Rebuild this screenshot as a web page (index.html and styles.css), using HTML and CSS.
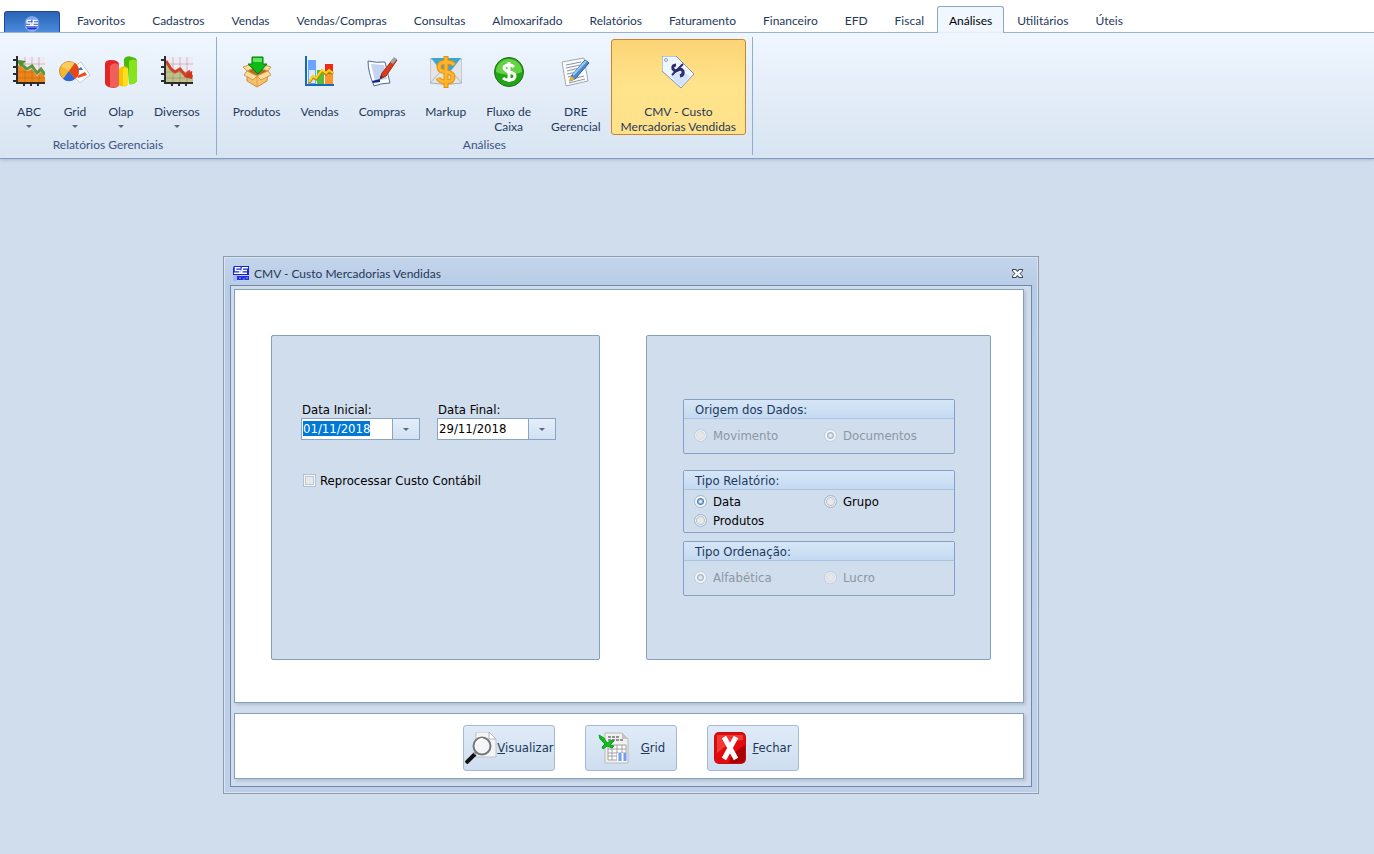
FILE: index.html
```html
<!DOCTYPE html>
<html lang="pt-BR">
	<head>
		<meta charset="utf-8">
		<title>CMV - Custo Mercadorias Vendidas</title>
		<link rel="stylesheet" href="styles.css">
	</head>
	<body>

		<nav class="tabBar">
			<button class="appBtn" aria-label="Menu">
				<svg width="16" height="16" viewBox="0 0 16 16">
					<circle cx="8" cy="8" r="7.500" fill="#2450d0"/>
					<path d="M1 5a7.500 7.500 0 0 1 14 0z" fill="#7ba4f2"/>
					<path d="M1 11h14a7.500 7.500 0 0 1-14 0z" fill="#9db8f6"/>
					<path d="M7 4.500H3v2.500h4v2.500H2M14 4.500H9.500L8.500 9.500H14M9 7h5" fill="none" stroke="#fff" stroke-width="1.500"/>
					<path d="M3 12.500h10" stroke="#1d2fd0" stroke-width="2"/>
					<circle cx="8" cy="8" r="7" fill="none" stroke="#86abf0" stroke-width="1"/>
				</svg>
			</button>
			<a href="#" class="tab">Favoritos</a>
			<a href="#" class="tab">Cadastros</a>
			<a href="#" class="tab">Vendas</a>
			<a href="#" class="tab">Vendas/Compras</a>
			<a href="#" class="tab">Consultas</a>
			<a href="#" class="tab">Almoxarifado</a>
			<a href="#" class="tab">Relatórios</a>
			<a href="#" class="tab">Faturamento</a>
			<a href="#" class="tab">Financeiro</a>
			<a href="#" class="tab">EFD</a>
			<a href="#" class="tab">Fiscal</a>
			<a href="#" class="tab active">Análises</a>
			<a href="#" class="tab">Utilitários</a>
			<a href="#" class="tab">Úteis</a>
		</nav>

		<div class="ribbon">
			<!-- Relatórios Gerenciais -->
			<div class="group">
				<div class="items">
					<button class="item">
						<svg class="icon" viewBox="0 0 32 32">
							<path d="M5 1h27v25H5z" fill="#f1e9f5"/>
							<path d="M5 9l5 3 4 3 5-2 5 7 4-4 4 5v6H5z" fill="#f08313"/>
							<path d="M5 5l5 5 4 3 5-3 5 7 4-4 4 6" fill="none" stroke="#5b9b38" stroke-width="3"/>
							<path d="M5 4l8 1-6 6z" fill="#4f9430"/>
							<path d="M12 1v25M19 1v25M26 1v25M5 8h27M5 16h27M5 22h27" stroke="#6b5549" stroke-opacity=".3"/>
							<path d="M4 0v28M3 27h29" stroke="#2d2d2d" stroke-width="2"/>
							<path d="M0 4h4M0 11h4M0 18h4M0 25h4M11 27v3M18 27v3M25 27v3" stroke="#2d2d2d" stroke-width="2"/>
						</svg>
						<span>ABC</span><i class="arrow"></i>
					</button>
					<button class="item">
						<svg class="icon" viewBox="0 0 32 32">
							<path d="M17 9l5-3 9 13-10 8-6-6z" fill="#fafafa" stroke="#c9c9d1"/>
							<path d="M18 14l4-3 2 3z" fill="#316fe0"/>
							<path d="M18 20l8-4 2 3-9 3z" fill="#ea4b24"/>
							<circle cx="10" cy="15" r="9.500" fill="#f7b62f" stroke="#c98a3a"/>
							<path d="M2 10a10 10 0 0 1 13-3l-5 8z" fill="#fbdc7c" fill-opacity=".6"/>
							<path d="M10 15l6-8a10 10 0 0 1 0 16z" fill="#e4481a"/>
							<path d="M10 15l6 8a10 10 0 0 1-12 0z" fill="#2b66da"/>
						</svg>
						<span>Grid</span><i class="arrow"></i>
					</button>
					<button class="item">
						<svg class="icon" viewBox="0 0 32 32">
							<path d="M0 8q0-4 6-4 8 0 8 5v20q-2 3-6 3-8-1-8-5z" fill="#e32527"/>
							<path d="M5 10q4-5 9-1v21q-4 3-9 1z" fill="#f0605a"/>
							<path d="M14 13q4-5 9-1v17q-5 3-9 0z" fill="#f5c400"/>
							<path d="M18 13q3-2 5 0v16l-5 1z" fill="#ffdf22"/>
							<path d="M19 3q2-4 8-2 5 1 5 4v20q-3 4-8 3l-1-16-4-2z" fill="#4db80c"/>
							<path d="M24 5q4-3 8 0v20q-3 4-8 3z" fill="#86e41b"/>
						</svg>
						<span>Olap</span><i class="arrow"></i>
					</button>
					<button class="item">
						<svg class="icon" viewBox="0 0 32 32">
							<path d="M5 1h27v25H5z" fill="#f1e9f5"/>
							<path d="M5 5l5 8 4 3 5-3 5 7 4-4 4 5v6H5z" fill="#bfc18c"/>
							<path d="M12 1v25M19 1v25M26 1v25M5 8h27M5 16h27M5 22h27" stroke="#6b5549" stroke-opacity=".3"/>
							<path d="M5 5l5 8 4 3 5-3 5 6 4-3 3 5" fill="none" stroke="#cf4228" stroke-width="3"/>
							<path d="M31 15v8l-8-2z" fill="#cf3322"/>
							<path d="M4 0v28M3 27h29" stroke="#2d2d2d" stroke-width="2"/>
							<path d="M0 4h4M0 11h4M0 18h4M0 25h4M11 27v3M18 27v3M25 27v3" stroke="#2d2d2d" stroke-width="2"/>
						</svg>
						<span>Diversos</span><i class="arrow"></i>
					</button>
				</div>
				<div class="groupName">Relatórios Gerenciais</div>
			</div>

			<!-- Análises -->
			<div class="group">
				<div class="items">
					<button class="item">
						<svg class="icon" viewBox="0 0 32 32">
							<path d="M6 15l10-4 11 4-1 10-10 6-10-6z" fill="#f6c16c" stroke="#c98c37"/>
							<path d="M6 15l10 5 11-5-11-5z" fill="#a96e27"/>
							<path d="M6 15l10 5-4 4-9-5zM27 15l-11 5 4 4 10-5zM6 15l-4-4 6-2 5 3zM27 15l3-4-6-2-5 3z" fill="#fddb9b" stroke="#d19a4b"/>
							<path d="M16 21v10" stroke="#dda04d"/>
							<path d="M11 1h11v7h4l-9 10-10-10h4z" fill="#0dbb18" stroke="#087a10"/>
							<path d="M12 2h9v4h-9z" fill="#64e45e"/>
						</svg>
						<span>Produtos</span>
					</button>
					<button class="item">
						<svg class="icon" viewBox="0 0 32 32">
							<path d="M4 4h8v24H4z" fill="#6ba5ff"/>
							<path d="M5 14h6v13H5z" fill="#d9eaff"/>
							<path d="M13 14h7v14h-7z" fill="#54bd35"/>
							<path d="M21 8h8v20h-8z" fill="#ed2a13"/>
							<path d="M21 18h8v10h-8z" fill="#ff942b"/>
							<path d="M5 27l4-6 3 2 6-8 4 3 3-3 4 3" fill="none" stroke="#b18e00" stroke-width="3"/>
							<path d="M5 26l4-6 3 2 6-8 4 3 3-3 4 3" fill="none" stroke="#ffd21d" stroke-width="2"/>
							<path d="M2 0v29h28" fill="none" stroke="#1869be" stroke-width="2"/>
						</svg>
						<span>Vendas</span>
					</button>
					<button class="item">
						<svg class="icon" viewBox="0 0 32 32">
							<path d="M2 5q8 2 17 1l5 21q-8 0-16 3Q2 16 2 5z" fill="#fff" stroke="#4c6b9c"/>
							<path d="M5 8l13 1 3 14-12 2z" fill="#c4d3f1"/>
							<path d="M6 25l8-2v3l-7 1z" fill="#11278b"/>
							<path d="M14 23l2-6L28 2l3 2-11 16z" fill="#de3a1a" stroke="#983018"/>
							<path d="M24 6l4-5 3 2-4 5z" fill="#a1a5ae"/>
							<path d="M14 23l3-2-2-2z" fill="#30343c"/>
						</svg>
						<span>Compras</span>
					</button>
					<button class="item">
						<svg class="icon" viewBox="0 0 32 32">
							<path d="M0 3h32v24q-16 3-32 0z" fill="#e2e5e8" stroke="#a7afb7"/>
							<path d="M1 2h30L20 16h-8z" fill="#38a7d7"/>
							<path d="M0 27l12-13M32 27L20 14" stroke="#aeb5bb"/>
							<path d="M24 9q-2-3-8-3-7 0-7 5 0 4 7 5t7 5q0 5-7 5-6 0-8-4M16 0v32" fill="none" stroke="#e98d08" stroke-width="5"/>
							<path d="M24 9q-2-3-8-3-7 0-7 5 0 4 7 5t7 5q0 5-7 5-6 0-8-4M16 1v30" fill="none" stroke="#ffb52c" stroke-width="3"/>
						</svg>
						<span>Markup</span>
					</button>
					<button class="item">
						<svg class="icon" viewBox="0 0 32 32">
							<circle cx="16" cy="16" r="14.500" fill="#1fa516" stroke="#25671f"/>
							<path d="M3 16a13 13 0 0 1 26 0q-13 6-26 0z" fill="#63d344"/>
							<path d="M21 11q-2-2-5-2-5 0-5 3 0 2 5 4 6 1 6 4 0 4-6 4-4 0-6-2M16 6v20" fill="none" stroke="#fff" stroke-width="3"/>
						</svg>
						<span>Fluxo de<br>Caixa</span>
					</button>
					<button class="item">
						<svg class="icon" viewBox="0 0 32 32">
							<path d="M2 6l22-4 4 23-22 5z" fill="#fafbfc" stroke="#a2a8af"/>
							<path d="M6 9l15-3M6 12l14-3M7 15l12-3M7 18l10-2M8 21l7-2M9 24l15-4M9 27l16-4" stroke="#8d949d"/>
							<path d="M10 25l2-6L25 4l4 3-14 16z" fill="#4e8cd2" stroke="#285992"/>
							<path d="M13 19L26 5" stroke="#9ac9f2" stroke-width="2"/>
							<path d="M9 26l2-6 4 3z" fill="#e6b337"/>
						</svg>
						<span>DRE<br>Gerencial</span>
					</button>
					<button class="item selected">
						<svg class="icon" viewBox="0 0 32 32">
							<path d="M0 0h14l18 18-13 14L0 15z" fill="#eef6fe" stroke="#7f96bb"/>
							<path d="M8 20l11-5 9 5-9 11z" fill="#d1e4fa"/>
							<circle cx="4" cy="4" r="1.500" fill="#fff" stroke="#8b9dbc"/>
							<path d="M14 9q-4 0-3 4 2 3 5 1t5 1q1 4-3 5" fill="none" stroke="#302b6b" stroke-width="3"/>
							<path d="M10 19l11-11" stroke="#302b6b" stroke-width="2"/>
						</svg>
						<span>CMV - Custo<br>Mercadorias Vendidas</span>
					</button>
				</div>
				<div class="groupName">Análises</div>
			</div>
		</div>

		<main class="desktop">
			<form class="window">
				<div class="titleBar">
					<svg width="16" height="15" viewBox="0 0 16 15">
						<path d="M1 0h15v9H0V2z" fill="#1428cf"/>
						<path d="M7.500 1.800H2.500v2.700h4.500v2.700H1M15 1.800H9.500L8.500 7.200H14M9 4.500h5" fill="none" stroke="#fff" stroke-width="1.500"/>
						<path d="M0 9h5l-1 6H0z" fill="#a9b9f0"/>
						<path d="M4 12h12" stroke="#2432dc" stroke-width="4"/>
						<path d="M7 11v2M11 12v2M14 11v2" stroke="#8d9cf0"/>
					</svg>
					<span class="title">CMV - Custo Mercadorias Vendidas</span>
					<button type="button" class="closeBtn" aria-label="Fechar janela">
						<svg width="11" height="9" viewBox="0 0 11 9">
							<path d="M0 0h4l1.500 1.500L7 0h4v2L8.500 4.500 11 7v2H7L5.500 7.500 4 9H0V7l2.500-2.500L0 2z" fill="#3c4659"/>
							<path d="M1 1h2.500l2 2 2-2H10v1L7.500 4.500 10 7v1H7.500l-2-2-2 2H1V7l2.500-2.500L1 2z" fill="#fff"/>
						</svg>
					</button>
				</div>

				<div class="frame">
					<div class="sheet content">
						<div class="panel left">
							<div class="dates">
								<div class="field">
									<label for="dataInicial">Data Inicial:</label>
									<div class="combo">
										<input type="text" id="dataInicial" value="01/11/2018">
										<button type="button" aria-label="Abrir calendário"><i class="arrow"></i></button>
									</div>
								</div>
								<div class="field">
									<label for="dataFinal">Data Final:</label>
									<div class="combo">
										<input type="text" id="dataFinal" value="29/11/2018">
										<button type="button" aria-label="Abrir calendário"><i class="arrow"></i></button>
									</div>
								</div>
							</div>
							<label class="check"><input type="checkbox">Reprocessar Custo Contábil</label>
						</div>

						<div class="panel right">
							<fieldset class="box origem" disabled>
								<legend>Origem dos Dados:</legend>
								<div class="options">
									<label><input type="radio" name="origem">Movimento</label>
									<label><input type="radio" name="origem" checked>Documentos</label>
								</div>
							</fieldset>
							<fieldset class="box tipo">
								<legend>Tipo Relatório:</legend>
								<div class="options">
									<label><input type="radio" name="tipo" checked>Data</label>
									<label><input type="radio" name="tipo">Grupo</label>
									<label><input type="radio" name="tipo">Produtos</label>
								</div>
							</fieldset>
							<fieldset class="box" disabled>
								<legend>Tipo Ordenação:</legend>
								<div class="options">
									<label><input type="radio" name="ordem" checked>Alfabética</label>
									<label><input type="radio" name="ordem">Lucro</label>
								</div>
							</fieldset>
						</div>
					</div>

					<div class="sheet actions">
						<button type="button" class="action tight">
							<svg width="32" height="32" viewBox="0 0 32 32">
								<path d="M11 0h13l7 7v18H11z" fill="#f3f4f5" stroke="#bfc2c6"/>
								<path d="M24 0v7h7z" fill="#fff" stroke="#b3b6bb"/>
								<path d="M1 31l9-9" stroke="#111" stroke-width="4"/>
								<path d="M9 22l3-3" stroke="#999" stroke-width="2"/>
								<circle cx="17" cy="14" r="8.500" fill="#f2f6f8" stroke="#777" stroke-width="2"/>
								<path d="M11 12q2-5 7-5" fill="none" stroke="#fff" stroke-width="2"/>
							</svg>
							<span><u>V</u>isualizar</span>
						</button>
						<button type="button" class="action wide">
							<svg width="32" height="32" viewBox="0 0 32 32">
								<path d="M7 1h17l6 6v24H7z" fill="#f1f1ef" stroke="#b8b9b8"/>
								<path d="M24 1v6h6z" fill="#c4c4c4"/>
								<path d="M10 5h12M10 8h15" stroke="#929292" stroke-width="2" stroke-dasharray="3 1"/>
								<path d="M10 13h18v15H10zM10 17h18M10 21h18M10 24h9M14 13v15M19 13v15M24 13v8" fill="#fff" stroke="#a0a0a0"/>
								<path d="M19 21h10v9H19z" fill="#f4f7fc"/>
								<path d="M22 21v8M27 21v8" stroke="#729eef" stroke-width="3"/>
								<path d="M1 3l5 3 3 5 5-3 2 1-4 4 4 1-2 2-5-2-4 3-1-2 3-3-5-5z" fill="#10be22" stroke="#08a318"/>
							</svg>
							<span><u>G</u>rid</span>
						</button>
						<button type="button" class="action">
							<svg width="32" height="32" viewBox="0 0 32 32">
								<rect width="32" height="32" rx="5" fill="#bd1015"/>
								<rect x="1" y="1" width="30" height="30" rx="4" fill="#e3090d"/>
								<path d="M3 3h26v5Q18 8 3 21z" fill="#f13a37"/>
								<path d="M15 31q2-10 16-18v14q-1 4-5 4z" fill="#aa0003"/>
								<path d="M10 5l12 22M22 5L10 27" stroke="#fff" stroke-width="5"/>
							</svg>
							<span><u>F</u>echar</span>
						</button>
					</div>
				</div>
			</form>
		</main>

		<script type="text/javascript">
			var DataInicial = document.getElementById('dataInicial');

			DataInicial.focus();
			DataInicial.select();
		</script>
	</body>
</html>
```
FILE: styles.css
```css
* {
	margin: 0;
	padding: 0;
	box-sizing: border-box;
}

body {
	min-height: 100vh;
	display: flex;
	flex-direction: column;
	background-color: #d0dded;
	font: 12px/15px Lato, "Open Sans", sans-serif;
	color: #1e395b;
}

button {
	font: inherit;
	color: inherit;
	border: 0;
	background: none;
}

.tabBar {
	display: flex;
	align-items: flex-end;
	height: 33px;
	padding-left: 4px;
	background-color: #fff;
	border-bottom: 1px solid #9bb3cc;
}

.tabBar .appBtn {
	width: 56px;
	height: 21px;
	margin-right: 4px;
	padding-top: 3px;
	border: 1px solid #1d4a9d;
	border-bottom: 0;
	border-radius: 3px 3px 0 0;
	background: linear-gradient(#2c64b5, #4a8bdc);
}

.tabBar .appBtn svg {
	display: block;
	margin: 0 auto;
}

.tabBar .tab {
	height: 26px;
	margin-left: -1px;
	padding: 6px 13px 0;
	border: 1px solid transparent;
	border-bottom: 0;
	color: #1e395b;
	text-decoration: none;
	white-space: nowrap;
}

.tabBar .active {
	height: 27px;
	margin-bottom: -1px;
	padding: 6px 11px 0;
	border-color: #8ba8cc;
	border-radius: 3px 3px 0 0;
	background-color: #f1f7fe;
	color: #000;
}

.ribbon {
	display: flex;
	height: 126px;
	padding: 4px 0 3px;
	border-bottom: 1px solid #849dbd;
	background: linear-gradient(#eff6fe, #d8e4f2);
	box-shadow: 0 1px 3px #a9b9ce;
}

.ribbon .group {
	display: flex;
	flex-direction: column;
	padding: 2px 6px 0;
	border-right: 1px solid #98abc6;
}

.ribbon .items {
	display: flex;
}

.ribbon .item {
	display: flex;
	flex-direction: column;
	align-items: center;
	height: 96px;
	min-width: 46px;
	padding: 16px 9px 0;
	border: 1px solid transparent;
	border-radius: 3px;
	white-space: nowrap;
}

.ribbon .item .icon {
	width: 32px;
	height: 32px;
	margin: 0 -4px 16px;
	flex: none;
}

.ribbon .selected {
	border-color: #c78533;
	background: linear-gradient(#fcd475, #ffe48c 50%, #ffe18a);
}

.arrow {
	display: block;
	border: 3px solid transparent;
	border-top-color: #5d6778;
	border-bottom: 0;
}

.ribbon .item .arrow {
	margin-top: 6px;
}

.ribbon .groupName {
	padding-top: 2px;
	text-align: center;
	color: #3b5380;
}

.desktop {
	flex: 1;
	position: relative;
}

/* 窗口 */
.window {
	position: absolute;
	left: 223px;
	top: 97px;
	width: 816px;
	padding: 0 6px 6px;
	border: 1px solid #8e9bac;
	background: linear-gradient(#c3d5eb, #b9cce6 30px, #bed0e8);
	box-shadow: inset 0 0 0 1px #d9e5f3;
}

.titleBar {
	display: flex;
	align-items: center;
	height: 28px;
	padding: 4px 9px 0 3px;
}

.titleBar .title {
	flex: 1;
	padding-left: 5px;
}

.titleBar .closeBtn {
	width: 11px;
	height: 9px;
}

.titleBar svg {
	display: block;
}

.frame {
	display: flex;
	flex-direction: column;
	gap: 10px;
	padding: 3px 7px 7px 3px;
	border: 1px solid #7087ab;
	background-color: #d0dded;
}

.sheet {
	border: 1px solid #869fbd;
	background-color: #fff;
	box-shadow: 2px 2px 3px #b0bfd2;
}

.content {
	display: flex;
	gap: 46px;
	padding: 45px 32px 42px 36px;
	font: 13px/15px "DejaVu Sans Condensed", "DejaVu Sans", sans-serif;
	color: #000;
}

.panel {
	height: 325px;
	border: 1px solid #869fbd;
	border-radius: 2px;
	background-color: #d0dded;
}

.panel.left {
	flex: 1 1 329px;
	padding: 66px 29px 0;
}

.panel.right {
	flex: 1 1 345px;
	padding: 63px 35px 0 36px;
}

.dates {
	display: flex;
	gap: 17px;
}

.field label {
	display: block;
	padding-left: 1px;
}

.combo {
	display: flex;
	width: 119px;
	height: 22px;
	margin-top: 1px;
	border: 1px solid #8ba3c4;
	background-color: #fff;
}

.combo input {
	flex: 1;
	min-width: 0;
	height: 19px;
	padding: 0 1px;
	border: 0;
	outline: 0;
	background: none;
	font: inherit;
	color: #000;
}

.combo input::selection {
	background-color: #0078d7;
	color: #fff;
}

.combo button {
	display: flex;
	align-items: center;
	justify-content: center;
	width: 27px;
	border-left: 1px solid #8ba3c4;
	background: linear-gradient(#e4eefa, #d1e1f2);
}

.check {
	display: flex;
	align-items: center;
	gap: 4px;
	margin: 33px 0 0 2px;
}

.check input {
	appearance: none;
	width: 13px;
	height: 13px;
	border: 1px solid #abc1de;
	background-color: #e6e8ea;
	box-shadow: inset 0 0 0 1px #f5f7fa, inset 0 0 0 2px #c2c7ce;
}

.box {
	min-width: 0;
	margin-bottom: 8px;
	border: 1px solid #869fc4;
	border-radius: 2px;
}

.box.origem {
	margin-bottom: 16px;
}

.box legend {
	float: left;
	width: 100%;
	height: 19px;
	padding: 2px 11px 0;
	border-bottom: 1px solid #a9c4e1;
	background: linear-gradient(#d6e6f7, #c4daf2);
	color: #1e395b;
}

.box .options {
	clear: both;
	display: grid;
	grid-template-columns: 130px 1fr;
	row-gap: 4px;
	padding: 9px 10px 10px;
}

.box.tipo .options {
	padding: 4px 10px 4px;
}

.box .options label {
	display: flex;
	align-items: center;
	gap: 6px;
	height: 15px;
}

.box:disabled label {
	color: #8d96a2;
}

.box input {
	appearance: none;
	width: 13px;
	height: 13px;
	border: 1px solid #a3b7d3;
	border-radius: 50%;
	background-color: #e6e8ea;
	box-shadow: inset 0 0 0 1px #eef3f9, inset 0 0 0 2px #bcc2cb;
}

.box input:checked {
	background: radial-gradient(#d7e9f8 1px, #54779f 3px, #f0f5fa 4px);
	box-shadow: inset 0 0 0 1px #f2f6fb;
}

.box:disabled input {
	border-color: #c0cee2;
	background-color: #e4e6e8;
	box-shadow: inset 0 0 0 1px #eef2f7, inset 0 0 0 2px #d9dce0;
}

.box:disabled input:checked {
	background: radial-gradient(#e4ebf2 1px, #a9b4c1 3px, #f0f3f7 4px);
	box-shadow: inset 0 0 0 1px #eef2f7;
}

.actions {
	display: flex;
	justify-content: center;
	gap: 30px;
	padding: 11px 0 7px 4px;
	font: 13px/15px "DejaVu Sans Condensed", "DejaVu Sans", sans-serif;
}

.actions .action {
	display: flex;
	align-items: center;
	width: 92px;
	height: 46px;
	padding-left: 6px;
	border: 1px solid #a5b8d5;
	border-radius: 3px;
	background: linear-gradient(#e0ebf8, #cedeef);
}

.actions .action span {
	flex: 1;
	padding-bottom: 2px;
}

.actions .tight {
	padding-left: 1px;
}

.actions .wide {
	padding-left: 12px;
}
```
